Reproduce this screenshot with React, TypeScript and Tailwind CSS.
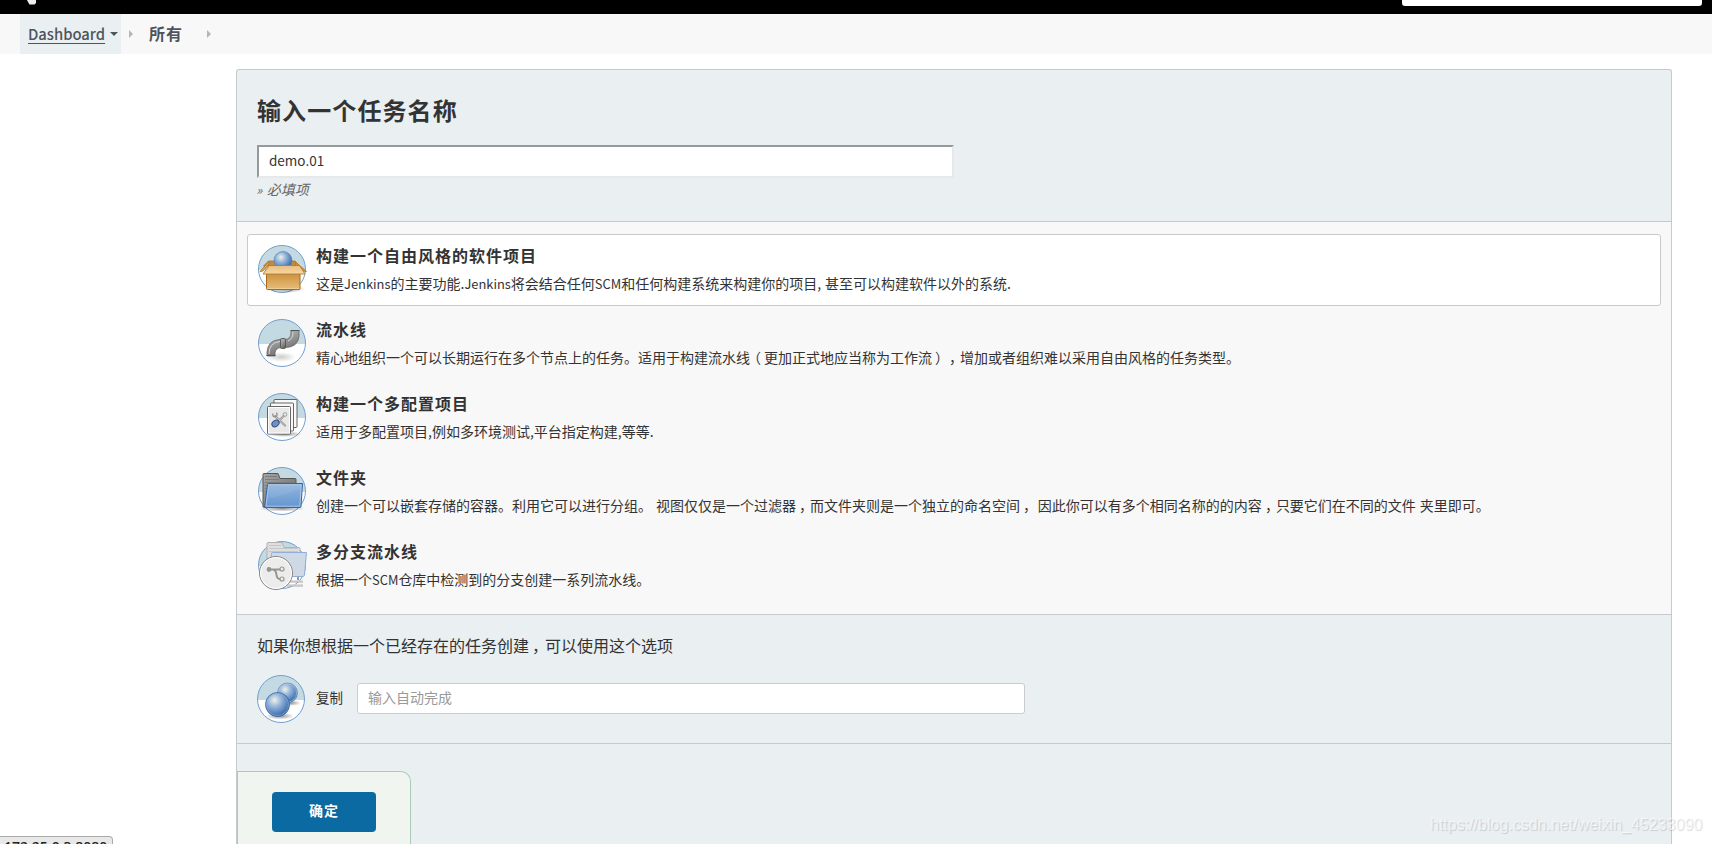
import type { ReactNode } from "react";

const Disc = ({ id, children }: { id: string; children: ReactNode }) => (
  <svg viewBox="0 0 48 48" className="h-12 w-12 shrink-0 overflow-visible">
    <defs>
      <clipPath id={`${id}-clip`}>
        <circle cx="24" cy="24" r="23.5" />
      </clipPath>
      <radialGradient id={`${id}-ball`} cx="0.38" cy="0.32" r="0.65">
        <stop offset="0" stopColor="#eef3e4" />
        <stop offset="0.4" stopColor="#9bb9dd" />
        <stop offset="1" stopColor="#3d6eae" />
      </radialGradient>
      <radialGradient id={`${id}-shade`}>
        <stop offset="0" stopColor="#000" stopOpacity="0.45" />
        <stop offset="1" stopColor="#000" stopOpacity="0" />
      </radialGradient>
    </defs>
    <g clipPath={`url(#${id}-clip)`}>
      <rect width="48" height="48" fill="#fff" />
      <rect width="48" height="25" fill="#c4dae2" />
    </g>
    <circle cx="24" cy="24" r="23.5" fill="none" stroke="#729fcf" />
    {children}
  </svg>
);

const BoxIcon = () => (
  <Disc id="box">
    <defs>
      <linearGradient id="box-front" x1="0" y1="0" x2="0" y2="1">
        <stop offset="0" stopColor="#c88d3a" />
        <stop offset="1" stopColor="#e9bd78" />
      </linearGradient>
      <linearGradient id="box-flap" x1="0" y1="0" x2="0" y2="1">
        <stop offset="0" stopColor="#e8bd7c" />
        <stop offset="1" stopColor="#f5d8a6" />
      </linearGradient>
    </defs>
    <ellipse cx="27" cy="44" rx="20" ry="4" fill="url(#box-shade)" />
    <path d="M10.500 16L37 16L42 21H5.500Z" fill="#c28a3c" stroke="#b0752a" strokeWidth="0.8" />
    <circle cx="25" cy="15.500" r="9" fill="url(#box-ball)" stroke="#5a7fb5" strokeWidth="0.7" />
    <path d="M11 16.500L2 26.500L5 26L11 19Z" fill="#e0ae61" stroke="#b0752a" strokeWidth="0.9" />
    <path d="M37 16.500L48.500 26.500L45 26L38 20Z" fill="#d39a48" stroke="#b0752a" strokeWidth="0.9" />
    <path d="M8.500 27H42V43.500Q42 44.500 41 44.500H9.500Q8.500 44.500 8.500 43.500Z" fill="url(#box-front)" stroke="#a8691b" />
    <path d="M9.500 43.500H41" stroke="#f3d39b" strokeWidth="0.8" />
    <path d="M11 20.500H41.500L47 29H5Z" fill="url(#box-flap)" stroke="#b57a2e" strokeWidth="0.9" />
  </Disc>
);

const PipeIcon = () => (
  <Disc id="pipe">
    <defs>
      <linearGradient id="pipe-metal" x1="0" y1="0" x2="0.5" y2="1">
        <stop offset="0" stopColor="#bdbdbd" />
        <stop offset="0.5" stopColor="#9a9a9a" />
        <stop offset="1" stopColor="#686868" />
      </linearGradient>
    </defs>
    <ellipse cx="23" cy="38" rx="15" ry="5" fill="url(#pipe-shade)" opacity="0.45" />
    <path d="M9 37V33Q10 21 22 20.500H27Q33 20 33 14V11.500H41V17Q40 28 28 28.500H23Q17.500 29 17 34V37Z" fill="url(#pipe-metal)" stroke="#666" strokeWidth="0.8" />
    <path d="M11 35Q11 23.500 22 22.500M30 22Q35 20 35 13" stroke="#d6d6d6" strokeWidth="1" fill="none" />
    <path d="M32.500 11.500H41.500M8.500 36.500H17.500" stroke="#555" strokeWidth="1.200" />
    <rect x="22.500" y="19.500" width="5" height="10" rx="1" fill="url(#pipe-metal)" stroke="#555" strokeWidth="0.9" />
  </Disc>
);

const MatrixIcon = () => (
  <Disc id="matrix">
    <ellipse cx="26" cy="41" rx="18" ry="3" fill="url(#matrix-shade)" />
    <g fill="#f8f8f8" stroke="#555" strokeWidth="0.9">
      <rect x="16" y="6.500" width="23" height="28" rx="0.8" />
      <rect x="12.500" y="10" width="23" height="28" rx="0.8" />
      <rect x="9.500" y="13.500" width="23" height="27.500" rx="0.8" />
    </g>
    <rect x="10.500" y="14.500" width="21" height="25.500" fill="#e8e8e8" stroke="#fff" strokeWidth="0.9" />
    <path d="M17 23L27 32.500M26.500 22L19 30" stroke="#888" strokeWidth="2" strokeLinecap="round" />
    <path d="M17 23L27 32.500M26.500 22L20 29" stroke="#ddd" strokeWidth="0.9" strokeLinecap="round" />
    <path d="M15 20.500Q14 24 17.500 24Q20 23 18.500 19.500" stroke="#888" strokeWidth="1.200" fill="none" />
    <circle cx="27" cy="21.500" r="1.800" fill="#eee" stroke="#888" strokeWidth="0.8" />
    <ellipse cx="17.500" cy="30.500" rx="3.900" ry="2.900" transform="rotate(-38 17.500 30.500)" fill="#7391c0" stroke="#2f4e84" />
  </Disc>
);

const FolderIcon = () => (
  <Disc id="folder">
    <defs>
      <linearGradient id="folder-back" x1="0" y1="0" x2="1" y2="1">
        <stop offset="0" stopColor="#a5a5a5" />
        <stop offset="1" stopColor="#666" />
      </linearGradient>
      <linearGradient id="folder-front" x1="0" y1="0" x2="0" y2="1">
        <stop offset="0" stopColor="#93b5dd" />
        <stop offset="1" stopColor="#6396d0" />
      </linearGradient>
    </defs>
    <ellipse cx="24" cy="41.500" rx="23" ry="3" fill="url(#folder-shade)" />
    <path d="M5 40V7.500Q5 6.500 6 6.500H20L22 11.500H37Q38 11.500 38 12.500V40Z" fill="url(#folder-back)" stroke="#565656" />
    <path d="M7 9.500H19M7 12.500H21M7 15.500H37M7 18.500H10M7 21.500H9M7 24.500H9" stroke="#7b7b7b" strokeWidth="0.9" />
    <path d="M9.500 17.500Q9.500 16.500 10.500 16.500H44.500L43 39.500Q43 40.500 42 40.500H6.500Z" fill="url(#folder-front)" stroke="#3465a4" />
    <path d="M10.800 17.800H43.200L41.800 39.200H8Z" fill="none" stroke="#b4cdeb" strokeWidth="0.8" />
    <path d="M10.500 31Q26 29 42.500 21V18H11.500Z" fill="#fff" opacity="0.08" />
  </Disc>
);

const BranchIcon = () => (
  <Disc id="branch">
    <path d="M9 34V3Q9 1.500 10 1.500H24L26 6.500H41Q42 6.500 42 7.500V34Z" fill="#dedede" stroke="#b2b2b2" />
    <path d="M11 4.500H23M11 7.500H40M11 10.500H40" stroke="#c4c4c4" strokeWidth="0.9" />
    <path d="M13.500 12.500Q13.500 11.500 14.500 11.500H48.500L46.500 34Q46 35.500 45 35.500H11Z" fill="#cfd9e5" stroke="#91afd6" />
    <path d="M30 40.500H45M29 44.500H45" stroke="#aaa" strokeWidth="2.200" />
    <path d="M30 40H45M29 44H45" stroke="#e6e6e6" strokeWidth="1" />
    <path d="M40 36V39" stroke="#999" strokeWidth="2" />
    <circle cx="18" cy="32" r="16.500" fill="#ececec" stroke="#858585" />
    <circle cx="18" cy="32" r="15.500" fill="none" stroke="#fff" />
    <path d="M11 28.500H22M15 28.500Q18 29 18.500 34Q19 38 22 38" stroke="#969690" strokeWidth="2" fill="none" />
    <circle cx="11" cy="28.500" r="2.400" fill="#969690" />
    <circle cx="24" cy="28" r="2" fill="#eee" stroke="#969690" strokeWidth="1.200" />
    <circle cx="24" cy="38" r="2" fill="#eee" stroke="#969690" strokeWidth="1.200" />
  </Disc>
);

const CopyIcon = () => (
  <Disc id="copy">
    <ellipse cx="33" cy="28" rx="11" ry="3" fill="url(#copy-shade)" />
    <circle cx="30.500" cy="18" r="10" fill="url(#copy-ball)" stroke="#6d8fc0" strokeWidth="0.8" />
    <circle cx="30.500" cy="18" r="9" fill="none" stroke="#b9cde8" strokeWidth="0.6" />
    <ellipse cx="23" cy="41" rx="14" ry="3.500" fill="url(#copy-shade)" />
    <circle cx="20.500" cy="29.500" r="12" fill="url(#copy-ball)" stroke="#34629f" strokeWidth="0.8" />
    <circle cx="20.500" cy="29.500" r="11" fill="none" stroke="#8fb0da" strokeWidth="0.6" />
  </Disc>
);

const items = [
  {
    title: "构建一个自由风格的软件项目",
    desc: "这是Jenkins的主要功能.Jenkins将会结合任何SCM和任何构建系统来构建你的项目, 甚至可以构建软件以外的系统.",
    icon: <BoxIcon />,
  },
  {
    title: "流水线",
    desc: "精心地组织一个可以长期运行在多个节点上的任务。适用于构建流水线（更加正式地应当称为工作流），增加或者组织难以采用自由风格的任务类型。",
    icon: <PipeIcon />,
  },
  {
    title: "构建一个多配置项目",
    desc: "适用于多配置项目,例如多环境测试,平台指定构建,等等.",
    icon: <MatrixIcon />,
  },
  {
    title: "文件夹",
    desc: "创建一个可以嵌套存储的容器。利用它可以进行分组。 视图仅仅是一个过滤器，而文件夹则是一个独立的命名空间， 因此你可以有多个相同名称的的内容，只要它们在不同的文件 夹里即可。",
    icon: <FolderIcon />,
  },
  {
    title: "多分支流水线",
    desc: "根据一个SCM仓库中检测到的分支创建一系列流水线。",
    icon: <BranchIcon />,
  },
];

// centres full-width punctuation in its cell and sets latin words a bit smaller
const Mixed = ({ text }: { text: string }) => (
  <>
    {text.split(/([A-Za-z]+|[，（）])/).map((part, index) => {
      if (part === "，" || part === "）") {
        return (
          <span key={index} className="mr-[-3px] ml-[3px]">
            {part}
          </span>
        );
      }
      if (part === "（") {
        return (
          <span key={index} className="mr-[3px] ml-[-3px]">
            {part}
          </span>
        );
      }
      if (/^[A-Za-z]/.test(part)) {
        return (
          <span key={index} className="text-[12.9px]">
            {part}
          </span>
        );
      }
      return part;
    })}
  </>
);

const Arrow = () => (
  <svg viewBox="0 0 4 8" className="h-2 w-1">
    <path d="M0 0L4 4L0 8Z" fill="#b5b5b5" />
  </svg>
);

const App = () => {
  return (
    <div className="relative flex h-[844px] w-full flex-col overflow-hidden bg-white font-['Noto_Sans_CJK_SC',sans-serif] text-sm text-[#333] [text-spacing-trim:space-all]">
      <header className="flex h-3.5 shrink-0 justify-between bg-black pr-[10px] pl-[27px]">
        <svg viewBox="0 0 10 5" className="h-[5px] w-2.5">
          <path d="M0 0H9V3L7.500 4.500H2.500L1 2Z" fill="#eee" />
        </svg>
        <div className="h-1.5 w-[300px] rounded-b-[3px] bg-white" />
      </header>

      <nav className="flex h-10 shrink-0 items-center bg-[#f8f8f8] pl-5 font-bold text-[#4d545d]">
        <div className="flex h-10 w-[101px] items-center bg-[#eaeff2] pl-2">
          <a className="w-[77px] text-[14.8px] font-medium whitespace-nowrap underline underline-offset-[3px]">
            Dashboard
          </a>
          <svg viewBox="0 0 8 4" className="ml-[5px] h-1 w-2">
            <path d="M0 0H8L4 4Z" fill="#4d545d" />
          </svg>
        </div>
        <div className="ml-2">
          <Arrow />
        </div>
        <a className="mb-0.5 ml-4 w-[58px] text-base tracking-[1px]">所有</a>
        <Arrow />
      </nav>

      <main className="mt-[15px] mr-10 ml-[236px] flex grow flex-col rounded-t-[3px] border border-b-0 border-[#c6cacd] bg-[#eaeff2]">
        <div className="h-[152px] shrink-0 border-b border-[#c6cacd] px-5 pt-[22px]">
          <h1 className="text-2xl leading-9 font-bold tracking-[1.100px]">输入一个任务名称</h1>
          <input
            type="text"
            defaultValue="demo.01"
            className="mt-[17px] block h-[33px] w-[697px] border-2 border-t-[#96999b] border-r-[#e6e8e9] border-b-[#e6e8e9] border-l-[#96999b] bg-white px-2.5 pb-[3px] text-[13.5px] outline-none"
          />
          <div className="-ml-px text-sm leading-[22px] text-[#666] italic">
            <span className="mr-[1.5px] text-[13px]">»</span> 必填项
          </div>
        </div>

        <ul className="flex h-[393px] shrink-0 flex-col gap-0.5 border-b border-[#c6cacd] bg-[#f8f8f8] px-[10px] pt-3">
          {items.map((item, index) => (
            <li
              key={item.title}
              className={
                index === 0
                  ? "flex h-[72px] gap-2.5 rounded-[3px] border border-[#c6cacd] bg-white px-2.5 pt-2.5"
                  : "flex h-[72px] gap-2.5 rounded-[3px] border border-transparent px-2.5 pt-2.5"
              }
            >
              {item.icon}
              <div className="-mt-0.5 whitespace-nowrap">
                <div className="text-base leading-6 font-bold tracking-[1px]">{item.title}</div>
                <div className="mt-1 text-sm leading-6 [word-spacing:0.8px]">
                  <Mixed text={item.desc} />
                </div>
              </div>
            </li>
          ))}
        </ul>

        <div className="h-[129px] shrink-0 border-b border-[#c6cacd] px-5 pt-[18px]">
          <p className="text-base leading-6">
            <Mixed text="如果你想根据一个已经存在的任务创建，可以使用这个选项" />
          </p>
          <div className="mt-[18px] flex items-center">
            <CopyIcon />
            <label className="mb-0.5 ml-[11px] w-[41px] text-[13.5px]">复制</label>
            <input
              type="text"
              placeholder="输入自动完成"
              className="mb-0.5 h-[31px] w-[668px] rounded-[3px] border border-[#ccc] bg-white px-2.5 pb-[3px] text-sm outline-none placeholder:text-[#999]"
            />
          </div>
        </div>

        <div className="mt-[27px] w-[174px] grow rounded-tr-[10px] border border-b-0 border-[#a9ccb9] bg-[#f0f5ef] pt-5 pl-[34px]">
          <button className="h-10 w-[104px] rounded bg-[#0b6aa2] pb-1 text-sm font-bold tracking-[1px] text-white">
            确定
          </button>
        </div>
      </main>

      <div className="absolute top-[836px] left-0 h-8 w-[113px] rounded-tr border border-l-0 border-[#aaa] bg-[#e8e8e8] pl-1 font-['Noto_Sans',sans-serif] text-sm leading-5 font-medium whitespace-nowrap text-[#222]">
        172.25.0.3:8080
      </div>
      <div className="absolute top-[815px] left-[1430px] font-['Liberation_Sans',sans-serif] text-base leading-5 whitespace-nowrap text-white/60 [text-shadow:1px_1px_1px_rgba(0,0,0,0.15)]">
        https://blog.csdn.net/weixin_45233090
      </div>
    </div>
  );
};

export default App;
